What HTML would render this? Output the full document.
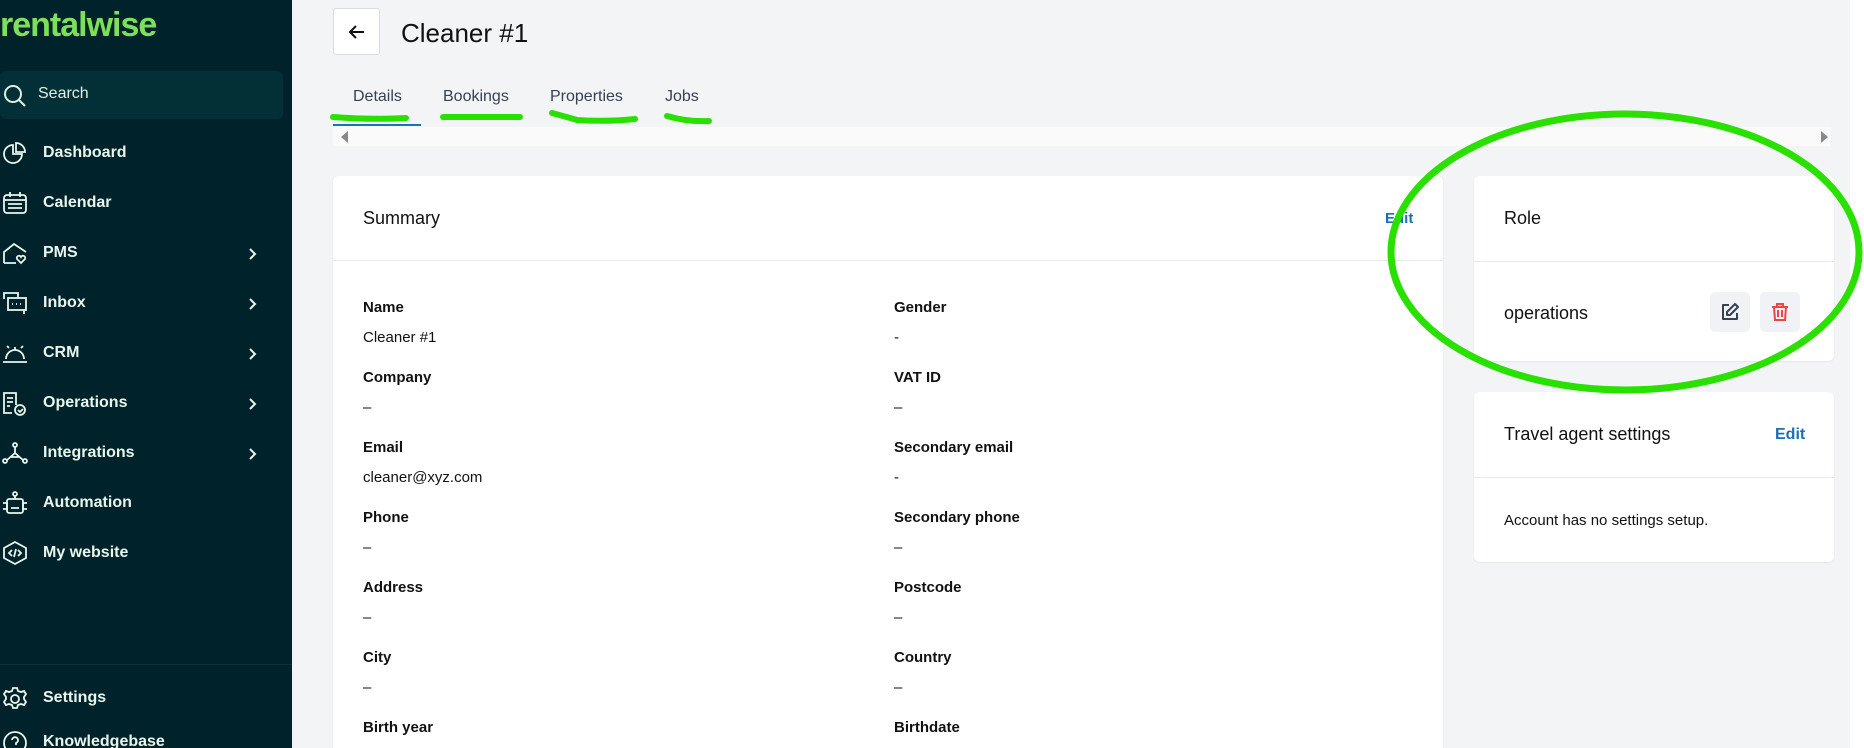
<!DOCTYPE html>
<html><head><meta charset="utf-8"><style>
*{box-sizing:border-box;margin:0;padding:0}
html,body{width:1864px;height:748px;overflow:hidden}
body{background:#f3f4f6;font-family:"Liberation Sans",sans-serif;color:#111}
#w{position:relative;width:1864px;height:748px;overflow:hidden}
.sb{position:absolute;left:0;top:0;width:292px;height:748px;background:#00222a;color:#e8f6ec}
.logo{position:absolute;left:0;top:6px;font-size:34px;font-weight:bold;color:#7ce05a;letter-spacing:-1px}
.search{position:absolute;left:0;top:71px;width:283px;height:48px;background:#032f36;border-radius:6px}
.search span{position:absolute;left:38px;top:14px;font-size:16px;color:#dfeee6}
.mi{position:absolute;left:43px;font-size:16px;font-weight:bold}
.ic{position:absolute;left:2px}
.ch{position:absolute;left:248px}
.abs{position:absolute}
.card{position:absolute;background:#fff;border-radius:6px;box-shadow:0 1px 2px rgba(0,0,0,.06)}
.hl{position:absolute;left:0;right:0;height:1px;background:#e5e7eb}
.lb{position:absolute;font-size:15px;font-weight:bold}
.vl{position:absolute;font-size:15px}
.tab{position:absolute;top:88px;font-size:16px;color:#374151}
</style></head><body><div id="w">
<div class="sb">
<div class="logo">rentalwise</div>
<div class="search"><svg class="abs" style="left:2px;top:12px" width="26" height="26" viewBox="0 0 26 26" fill="none" stroke="#dfeee6" stroke-width="2"><circle cx="11" cy="11" r="8"/><path d="M17 17l6 6"/></svg><span>Search</span></div>
<svg class="ic" style="top:141px" width="26" height="24" viewBox="0 0 26 24" fill="none" stroke="#e8f6ec" stroke-width="1.8"><path d="M11 4a9 9 0 1 0 9 9h-9z"/><path d="M14 2a9 9 0 0 1 9 9h-9z"/></svg>
<div class="mi" style="top:144px">Dashboard</div>
<svg class="ic" style="top:191px" width="26" height="24" viewBox="0 0 26 24" fill="none" stroke="#e8f6ec" stroke-width="1.8"><rect x="2" y="4" width="22" height="18" rx="3"/><path d="M2 9h22M8 1v5M18 1v5M6 13h14M6 17h14"/></svg>
<div class="mi" style="top:194px">Calendar</div>
<svg class="ic" style="top:241px" width="26" height="24" viewBox="0 0 26 24" fill="none" stroke="#e8f6ec" stroke-width="1.8"><path d="M2 22V11l10-8 12 8M2 22h12"/><path d="M19 22l-4-4a2 2 0 0 1 4-2 2 2 0 0 1 4 2z"/></svg>
<div class="mi" style="top:244px">PMS</div>
<svg class="ch" style="top:247px" width="10" height="14" viewBox="0 0 10 14" fill="none" stroke="#e8f6ec" stroke-width="2"><path d="M2 2l5 5-5 5"/></svg>
<svg class="ic" style="top:291px" width="26" height="24" viewBox="0 0 26 24" fill="none" stroke="#e8f6ec" stroke-width="1.8"><path d="M2 8V2h14v4"/><rect x="6" y="7" width="18" height="12"/><path d="M22 19v4M10 13h1M14 13h1M18 13h1"/></svg>
<div class="mi" style="top:294px">Inbox</div>
<svg class="ch" style="top:297px" width="10" height="14" viewBox="0 0 10 14" fill="none" stroke="#e8f6ec" stroke-width="2"><path d="M2 2l5 5-5 5"/></svg>
<svg class="ic" style="top:341px" width="26" height="24" viewBox="0 0 26 24" fill="none" stroke="#e8f6ec" stroke-width="1.8"><path d="M4 18a9 9 0 0 1 18 0M1 21h24M13 6v3M5 5l2 2M21 5l-2 2"/></svg>
<div class="mi" style="top:344px">CRM</div>
<svg class="ch" style="top:347px" width="10" height="14" viewBox="0 0 10 14" fill="none" stroke="#e8f6ec" stroke-width="2"><path d="M2 2l5 5-5 5"/></svg>
<svg class="ic" style="top:391px" width="26" height="26" viewBox="0 0 26 26" fill="none" stroke="#e8f6ec" stroke-width="1.8"><path d="M14 14V2H2v20h8M5 7h6M5 11h6M5 15h3"/><circle cx="18" cy="19" r="5"/><path d="M16 19l2 2 3-3"/></svg>
<div class="mi" style="top:394px">Operations</div>
<svg class="ch" style="top:397px" width="10" height="14" viewBox="0 0 10 14" fill="none" stroke="#e8f6ec" stroke-width="2"><path d="M2 2l5 5-5 5"/></svg>
<svg class="ic" style="top:441px" width="26" height="24" viewBox="0 0 26 24" fill="none" stroke="#e8f6ec" stroke-width="1.8"><circle cx="13" cy="4" r="2"/><circle cx="3" cy="20" r="2"/><circle cx="23" cy="20" r="2"/><path d="M13 6v6l-8 7M13 12l8 7M8 16h10"/></svg>
<div class="mi" style="top:444px">Integrations</div>
<svg class="ch" style="top:447px" width="10" height="14" viewBox="0 0 10 14" fill="none" stroke="#e8f6ec" stroke-width="2"><path d="M2 2l5 5-5 5"/></svg>
<svg class="ic" style="top:491px" width="26" height="24" viewBox="0 0 26 24" fill="none" stroke="#e8f6ec" stroke-width="1.8"><circle cx="13" cy="3" r="2"/><path d="M13 5v3"/><rect x="5" y="8" width="16" height="14" rx="2"/><path d="M1 12h4v6H1M25 12h-4v6h4M9 17h8"/></svg>
<div class="mi" style="top:494px">Automation</div>
<svg class="ic" style="top:541px" width="26" height="24" viewBox="0 0 26 24" fill="none" stroke="#e8f6ec" stroke-width="1.8"><path d="M13 1l11 6v10l-11 6-11-6V7z"/><path d="M10 9l-3 3 3 3M16 9l3 3-3 3M14 8l-2 8"/></svg>
<div class="mi" style="top:544px">My website</div>
<div class="abs" style="left:0;top:664px;width:292px;height:1px;background:#0b3038"></div>
<svg class="ic" style="top:686px" width="26" height="26" viewBox="0 0 26 26" fill="none" stroke="#e8f6ec" stroke-width="1.8"><circle cx="13" cy="13" r="4"/><path d="M11 2h4l1 3 3 1 3-1 2 3-2 3v2l2 3-2 3-3-1-3 1-1 3h-4l-1-3-3-1-3 1-2-3 2-3v-2l-2-3 2-3 3 1 3-1z"/></svg>
<div class="mi" style="top:689px">Settings</div>
<svg class="ic" style="top:730px" width="26" height="26" viewBox="0 0 26 26" fill="none" stroke="#e8f6ec" stroke-width="1.8"><circle cx="13" cy="13" r="11"/><path d="M10 10a3 3 0 1 1 4 3v2"/></svg>
<div class="mi" style="top:733px">Knowledgebase</div>
</div>

<div class="abs" style="left:333px;top:8px;width:47px;height:47px;background:#fff;border:1px solid #d8dbe0;border-radius:3px"><svg class="abs" style="left:13px;top:13px" width="20" height="20" viewBox="0 0 20 20" fill="none" stroke="#111" stroke-width="2"><path d="M17 10H3M9 4l-6 6 6 6"/></svg></div>
<div class="abs" style="left:401px;top:18px;font-size:26px;color:#111">Cleaner #1</div>

<div class="tab" style="left:353px">Details</div>
<div class="tab" style="left:443px">Bookings</div>
<div class="tab" style="left:550px">Properties</div>
<div class="tab" style="left:665px">Jobs</div>
<div class="abs" style="left:333px;top:124px;width:88px;height:2px;background:#1a73b8"></div>
<div class="abs" style="left:333px;top:127px;width:1498px;height:19px;background:#fafafa"></div>
<svg class="abs" style="left:340px;top:131px" width="10" height="12"><path d="M8 0v12L1 6z" fill="#888"/></svg>
<svg class="abs" style="left:1820px;top:131px" width="10" height="12"><path d="M1 0v12l7-6z" fill="#888"/></svg>

<div class="card" style="left:333px;top:176px;width:1110px;height:600px">
<div class="abs" style="left:30px;top:32px;font-size:18px">Summary</div>
<div class="abs" style="left:1052px;top:34px;font-size:15px;color:#1a6fb5;font-weight:bold">Edit</div>
<div class="hl" style="top:84px"></div>
<div class="lb" style="left:30px;top:123px">Name</div><div class="vl" style="left:30px;top:153px">Cleaner #1</div>
<div class="lb" style="left:561px;top:123px">Gender</div><div class="vl" style="left:561px;top:153px">-</div>
<div class="lb" style="left:30px;top:193px">Company</div><div class="vl" style="left:30px;top:223px">–</div>
<div class="lb" style="left:561px;top:193px">VAT ID</div><div class="vl" style="left:561px;top:223px">–</div>
<div class="lb" style="left:30px;top:263px">Email</div><div class="vl" style="left:30px;top:293px">cleaner@xyz.com</div>
<div class="lb" style="left:561px;top:263px">Secondary email</div><div class="vl" style="left:561px;top:293px">-</div>
<div class="lb" style="left:30px;top:333px">Phone</div><div class="vl" style="left:30px;top:363px">–</div>
<div class="lb" style="left:561px;top:333px">Secondary phone</div><div class="vl" style="left:561px;top:363px">–</div>
<div class="lb" style="left:30px;top:403px">Address</div><div class="vl" style="left:30px;top:433px">–</div>
<div class="lb" style="left:561px;top:403px">Postcode</div><div class="vl" style="left:561px;top:433px">–</div>
<div class="lb" style="left:30px;top:473px">City</div><div class="vl" style="left:30px;top:503px">–</div>
<div class="lb" style="left:561px;top:473px">Country</div><div class="vl" style="left:561px;top:503px">–</div>
<div class="lb" style="left:30px;top:543px">Birth year</div>
<div class="lb" style="left:561px;top:543px">Birthdate</div>
</div>

<div class="card" style="left:1474px;top:176px;width:360px;height:185px">
<div class="abs" style="left:30px;top:32px;font-size:18px">Role</div>
<div class="hl" style="top:85px"></div>
<div class="abs" style="left:30px;top:127px;font-size:18px">operations</div>
<div class="abs" style="left:236px;top:116px;width:40px;height:40px;background:#f0f2f6;border-radius:5px"><svg class="abs" style="left:10px;top:10px" width="20" height="20" viewBox="0 0 20 20" fill="none" stroke="#374151" stroke-width="2" stroke-linejoin="round"><path d="M9 3H3v14h14v-6"/><path d="M15 2l3 3-8 8H7v-3z"/></svg></div>
<div class="abs" style="left:286px;top:116px;width:40px;height:40px;background:#f0f2f6;border-radius:5px"><svg class="abs" style="left:10px;top:10px" width="20" height="20" viewBox="0 0 20 20" fill="none" stroke="#ef4444" stroke-width="2"><path d="M2 5h16M7 5V2h6v3M4 5l1 13h10l1-13M8 8v7M12 8v7"/></svg></div>
</div>

<div class="card" style="left:1474px;top:392px;width:360px;height:170px">
<div class="abs" style="left:30px;top:32px;font-size:18px">Travel agent settings</div>
<div class="abs" style="left:301px;top:34px;font-size:16px;color:#1a6fb5;font-weight:bold">Edit</div>
<div class="hl" style="top:85px"></div>
<div class="abs" style="left:30px;top:120px;font-size:15px">Account has no settings setup.</div>
</div>
<div class="abs" style="left:1850px;top:0;width:14px;height:748px;background:#fff"></div>
<svg class="abs" style="left:0;top:0" width="1864" height="748" fill="none" stroke="#2ae000" stroke-linecap="round" stroke-width="6">
<path d="M333 117q40 3 73 1"/><path d="M443 117h77"/><path d="M552 113q15 4 25 7q30 2 58-1"/><path d="M667 116q20 6 42 5"/>
<ellipse cx="1625" cy="252" rx="234" ry="138" stroke-width="7"/>
</svg>
</div></body></html>
